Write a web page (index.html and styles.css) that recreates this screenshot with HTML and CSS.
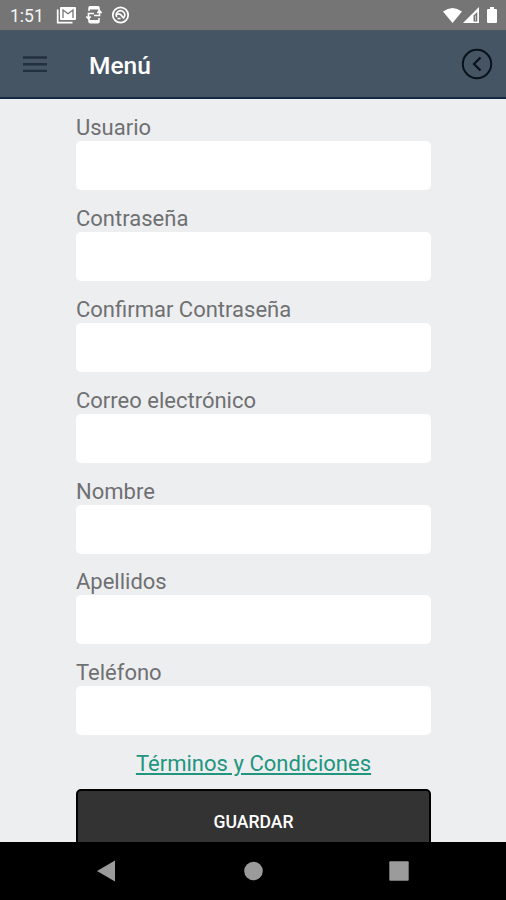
FILE: index.html
```html
<!DOCTYPE html>
<html lang="es">
<head>
    <meta charset="UTF-8">
    <meta name="viewport" content="width=device-width, initial-scale=1.0">
    <title>Menú</title>
    <link rel="stylesheet" href="styles.css">
</head>
<body>

    <div class="status-bar">
        <span class="clock">1:51</span>
        <svg class="status-left" width="76" height="20" viewBox="0 0 76 20">
            <!-- Mail -->
            <path d="M1.7 4.500v13.200H16.500" fill="none" stroke="#fff" stroke-width="1.700"/>
            <rect x="4" y="2" width="16" height="13" rx="1" fill="#fff"/>
            <path d="M7 13V5l5 3.800L17 5v8" fill="none" stroke="#757575" stroke-width="1.300"/>
            <!-- Phone -->
            <path d="M33 6V3q0-1.300 1.300-1.300h7.400q1.300 0 1.300 1.300v3M33 13v3.500q0 1.300 1.300 1.300h7.400q1.300 0 1.300-1.300V13" fill="none" stroke="#fff" stroke-width="1.500"/>
            <path d="M33 1.500h10v3H33zM33 15h10v3H33z" fill="#fff"/>
            <path d="M38 8.500h-5.500v4.500M30.300 11.500l2.200 2.300 2.200-2.300M38 10.500h5.500V6.500M41.300 8l2.200-2.300L45.700 8" fill="none" stroke="#fff" stroke-width="1.600"/>
            <!-- Sync -->
            <circle cx="64.500" cy="10" r="7.700" fill="none" stroke="#fff" stroke-width="1.800"/>
            <path d="M60.800 12a4.200 4.200 0 1 1 7 .5" fill="none" stroke="#fff" stroke-width="1.600"/>
            <path d="M61 9.500q2.500-1.500 4 .5l3 3.500M61.500 13.500h3" fill="none" stroke="#fff" stroke-width="1.700"/>
        </svg>
        <svg class="status-right" width="56" height="18" viewBox="0 0 56 18">
            <path d="M0 4.500Q9.500-2.500 19 4.500L9.500 16z" fill="#fff"/>
            <path d="M20 16L36 0v16z" fill="#fff"/>
            <path d="M30.500 8.500L34.300 5v9.500h-3.800z" fill="#757575"/>
            <path d="M32.500 8.500v5" stroke="#d5d5d5" stroke-width="0.800"/>
            <path d="M44 3q0-1 1-1h2V0h4v2h2q1 0 1 1v12q0 1-1 1h-8q-1 0-1-1z" fill="#fff"/>
        </svg>
    </div>

    <header class="toolbar">
        <svg class="menu-icon" width="24" height="18" viewBox="0 0 24 18">
            <path d="M0 2.500h24M0 9.300h24M0 15.900h24" stroke="#23313e" stroke-width="2.400"/>
        </svg>
        <h1 class="title">Menú</h1>
        <svg class="back-icon" width="32" height="32" viewBox="0 0 32 32">
            <circle cx="16" cy="16" r="14.200" fill="none" stroke="#09121b" stroke-width="2"/>
            <path d="M19.500 9.500L13 16l6.500 6.500" fill="none" stroke="#09121b" stroke-width="2.200"/>
        </svg>
    </header>

    <main class="content">
        <form class="form">
            <div class="field">
                <label for="usuario">Usuario</label>
                <input type="text" id="usuario">
            </div>
            <div class="field">
                <label for="clave">Contraseña</label>
                <input type="password" id="clave">
            </div>
            <div class="field">
                <label for="clave2">Confirmar Contraseña</label>
                <input type="password" id="clave2">
            </div>
            <div class="field">
                <label for="correo">Correo electrónico</label>
                <input type="email" id="correo">
            </div>
            <div class="field">
                <label for="nombre">Nombre</label>
                <input type="text" id="nombre">
            </div>
            <div class="field">
                <label for="apellidos">Apellidos</label>
                <input type="text" id="apellidos">
            </div>
            <div class="field">
                <label for="telefono">Teléfono</label>
                <input type="tel" id="telefono">
            </div>
            <a class="terms" href="#">Términos y Condiciones</a>
            <button class="save" type="submit">GUARDAR</button>
        </form>
    </main>

    <nav class="nav-bar">
        <svg width="20" height="22" viewBox="0 0 20 22"><path d="M1 11L19 0.500v21z" fill="#9b9b9b"/></svg>
        <svg width="20" height="22" viewBox="0 0 20 22"><circle cx="10.500" cy="11" r="9.300" fill="#9b9b9b"/></svg>
        <svg width="20" height="22" viewBox="0 0 20 22"><rect x="0.300" y="1.300" width="19.400" height="19.400" rx="1" fill="#9b9b9b"/></svg>
    </nav>

</body>
</html>
```

FILE: styles.css
```css
* {
    box-sizing: border-box;
}

body {
    font-family: Roboto, "Liberation Sans", sans-serif;
    background-color: #edeef0;
    margin: 0;
    height: 900px;
    display: flex;
    flex-direction: column;
    overflow: hidden;
}

.status-bar {
    background-color: #757575;
    height: 30px;
    flex: none;
    display: flex;
    align-items: center;
    padding: 0 7px 0 10px;
}

.clock {
    color: #f5f5f5;
    font-size: 17.5px;
    line-height: 30px;
    width: 46px;
    padding-top: 2px;
}

.status-right {
    margin-left: auto;
    margin-top: 1px;
}

.toolbar {
    background-color: #455564;
    height: 69px;
    flex: none;
    display: flex;
    align-items: center;
    padding: 0 13px 0 23px;
    border-bottom: 2px solid #12293f;
}

.title {
    color: #fff;
    font-size: 24.5px;
    font-weight: 500;
    line-height: 30px;
    margin: 4px 0 0 42px;
}

.back-icon {
    margin-left: auto;
}

.content {
    flex: 1;
    min-height: 0;
    overflow: hidden;
    padding: 15px 75px 0 76px;
}

.form {
    display: flex;
    flex-direction: column;
}

.field {
    display: flex;
    flex-direction: column;
    height: 90.9px;
}

label {
    color: #6f7072;
    font-size: 22px;
    line-height: 27px;
}

input {
    height: 49px;
    border: none;
    border-radius: 5px;
    background-color: #fff;
    padding: 0 10px;
    font-size: 20px;
}

.terms {
    color: #22957f;
    font-size: 22px;
    line-height: 27px;
    letter-spacing: 0.03px;
    text-align: center;
}

.save {
    height: 64px;
    flex: none;
    margin-top: 12px;
    padding-top: 3px;
    background-color: #333;
    color: #fff;
    border: 2px solid #000;
    border-radius: 5px;
    font-family: inherit;
    font-size: 17.6px;
    font-weight: 500;
}

.nav-bar {
    background-color: #000;
    height: 58px;
    flex: none;
    display: flex;
    align-items: center;
    justify-content: space-between;
    padding: 0 97px 0 96px;
}
```
